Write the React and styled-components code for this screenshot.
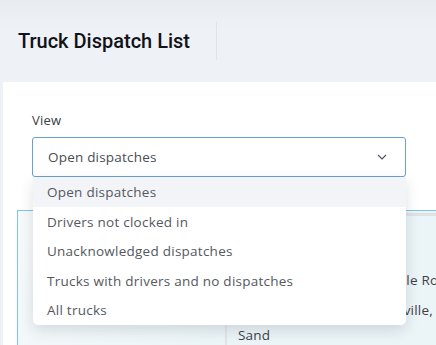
import React from "react"
import styled, { createGlobalStyle } from "styled-components"

const GlobalStyle = createGlobalStyle`
  body {
    margin: 0;
    background: #eef1f5;
    font-family: "Open Sans", "Lato", sans-serif;
  }
`

const Page = styled.div`
  width: 436px;
  height: 345px;
  overflow: hidden;
  background: linear-gradient(#e8ebef 0px, #eef1f5 30px);
`

const Header = styled.div`
  display: flex;
  align-items: center;
  height: 82px;
  padding-left: 18px;
  box-sizing: border-box;
`

const Title = styled.h1`
  margin: 0;
  font-family: "Roboto", sans-serif;
  font-weight: 500;
  font-size: 20px;
  color: #111318;
`

const Divider = styled.div`
  width: 1px;
  height: 38px;
  margin-left: 26px;
  background: #dfe2e7;
`

const Panel = styled.div`
  margin-left: 3px;
  background: #fff;
  height: 263px;
`

const Form = styled.div`
  padding: 29px 30px 0 29px;
`

const Label = styled.div`
  font-size: 13px;
  letter-spacing: 0.2px;
  color: #3a3d42;
  margin-bottom: 8px;
`

const Field = styled.div`
  position: relative;
`

const Select = styled.div`
  display: flex;
  align-items: center;
  justify-content: space-between;
  height: 40px;
  box-sizing: border-box;
  padding: 0 18px 0 15px;
  border: 1px solid #6a9fcf;
  border-radius: 3px;
  font-size: 13.5px;
  letter-spacing: 0.2px;
  color: #4a4d52;
`

const Menu = styled.ul`
  position: absolute;
  top: 40px;
  left: 1px;
  right: 0;
  margin: 0;
  padding: 0;
  list-style: none;
  background: #fff;
  border-radius: 0 0 5px 5px;
  box-shadow: 0 5px 14px rgba(30, 40, 60, 0.14);
  z-index: 2;
`

const Item = styled.li`
  display: flex;
  align-items: center;
  height: ${(p) => (p.$first ? "30px" : "29.5px")};
  padding-left: 14px;
  font-size: 13.5px;
  letter-spacing: 0.25px;
  color: #55585d;
  background: ${(p) => (p.$active ? "#f3f4f8" : "transparent")};
`

const Card = styled.div`
  display: flex;
  margin: 33px 0 0 14px;
  height: 140px;
  border-top: 1px solid #7cc5ec;
  border-left: 1px solid #7cc5ec;
  background: linear-gradient(135deg, #f7fafb, #ebf4f7 60%);
`

const CardSide = styled.div`
  flex: 0 0 207px;
`

const CardMain = styled.div`
  flex: 1;
  min-width: 0;
  overflow: hidden;
  border-left: 2px solid #e2e5e8;
  border-top: 3px solid #dfe2e5;
  margin-top: 2px;
  padding: 55px 0 0 11px;
  font-size: 13.5px;
  letter-spacing: 0.2px;
  color: #3f4247;
  white-space: nowrap;
`

const Line = styled.div`
  height: ${(p) => p.$h || "30px"};
`

const Chevron = () => (
  <svg width="10" height="6" viewBox="0 0 10 6" fill="none">
    <path d="M1 1l4 4 4-4" stroke="#4a4d6a" strokeWidth="1.1" />
  </svg>
)

const options = [
  "Open dispatches",
  "Drivers not clocked in",
  "Unacknowledged dispatches",
  "Trucks with drivers and no dispatches",
  "All trucks",
]

const App = () => {
  return (
    <Page>
      <GlobalStyle />
      <Header>
        <Title>Truck Dispatch List</Title>
        <Divider />
      </Header>
      <Panel>
        <Form>
          <Label>View</Label>
          <Field>
            <Select>
              <span>Open dispatches</span>
              <Chevron />
            </Select>
            <Menu>
              {options.map((o, i) => (
                <Item key={o} $active={i === 0} $first={i === 0}>
                  {o}
                </Item>
              ))}
            </Menu>
          </Field>
        </Form>
        <Card>
          <CardSide />
          <CardMain>
            <Line>Pickup: 420 Old Twelve Mile Road</Line>
            <Line $h="25px">Rocks Quarry, Hendersonville, TN</Line>
            <Line>Sand</Line>
          </CardMain>
        </Card>
      </Panel>
    </Page>
  )
}

export default App
